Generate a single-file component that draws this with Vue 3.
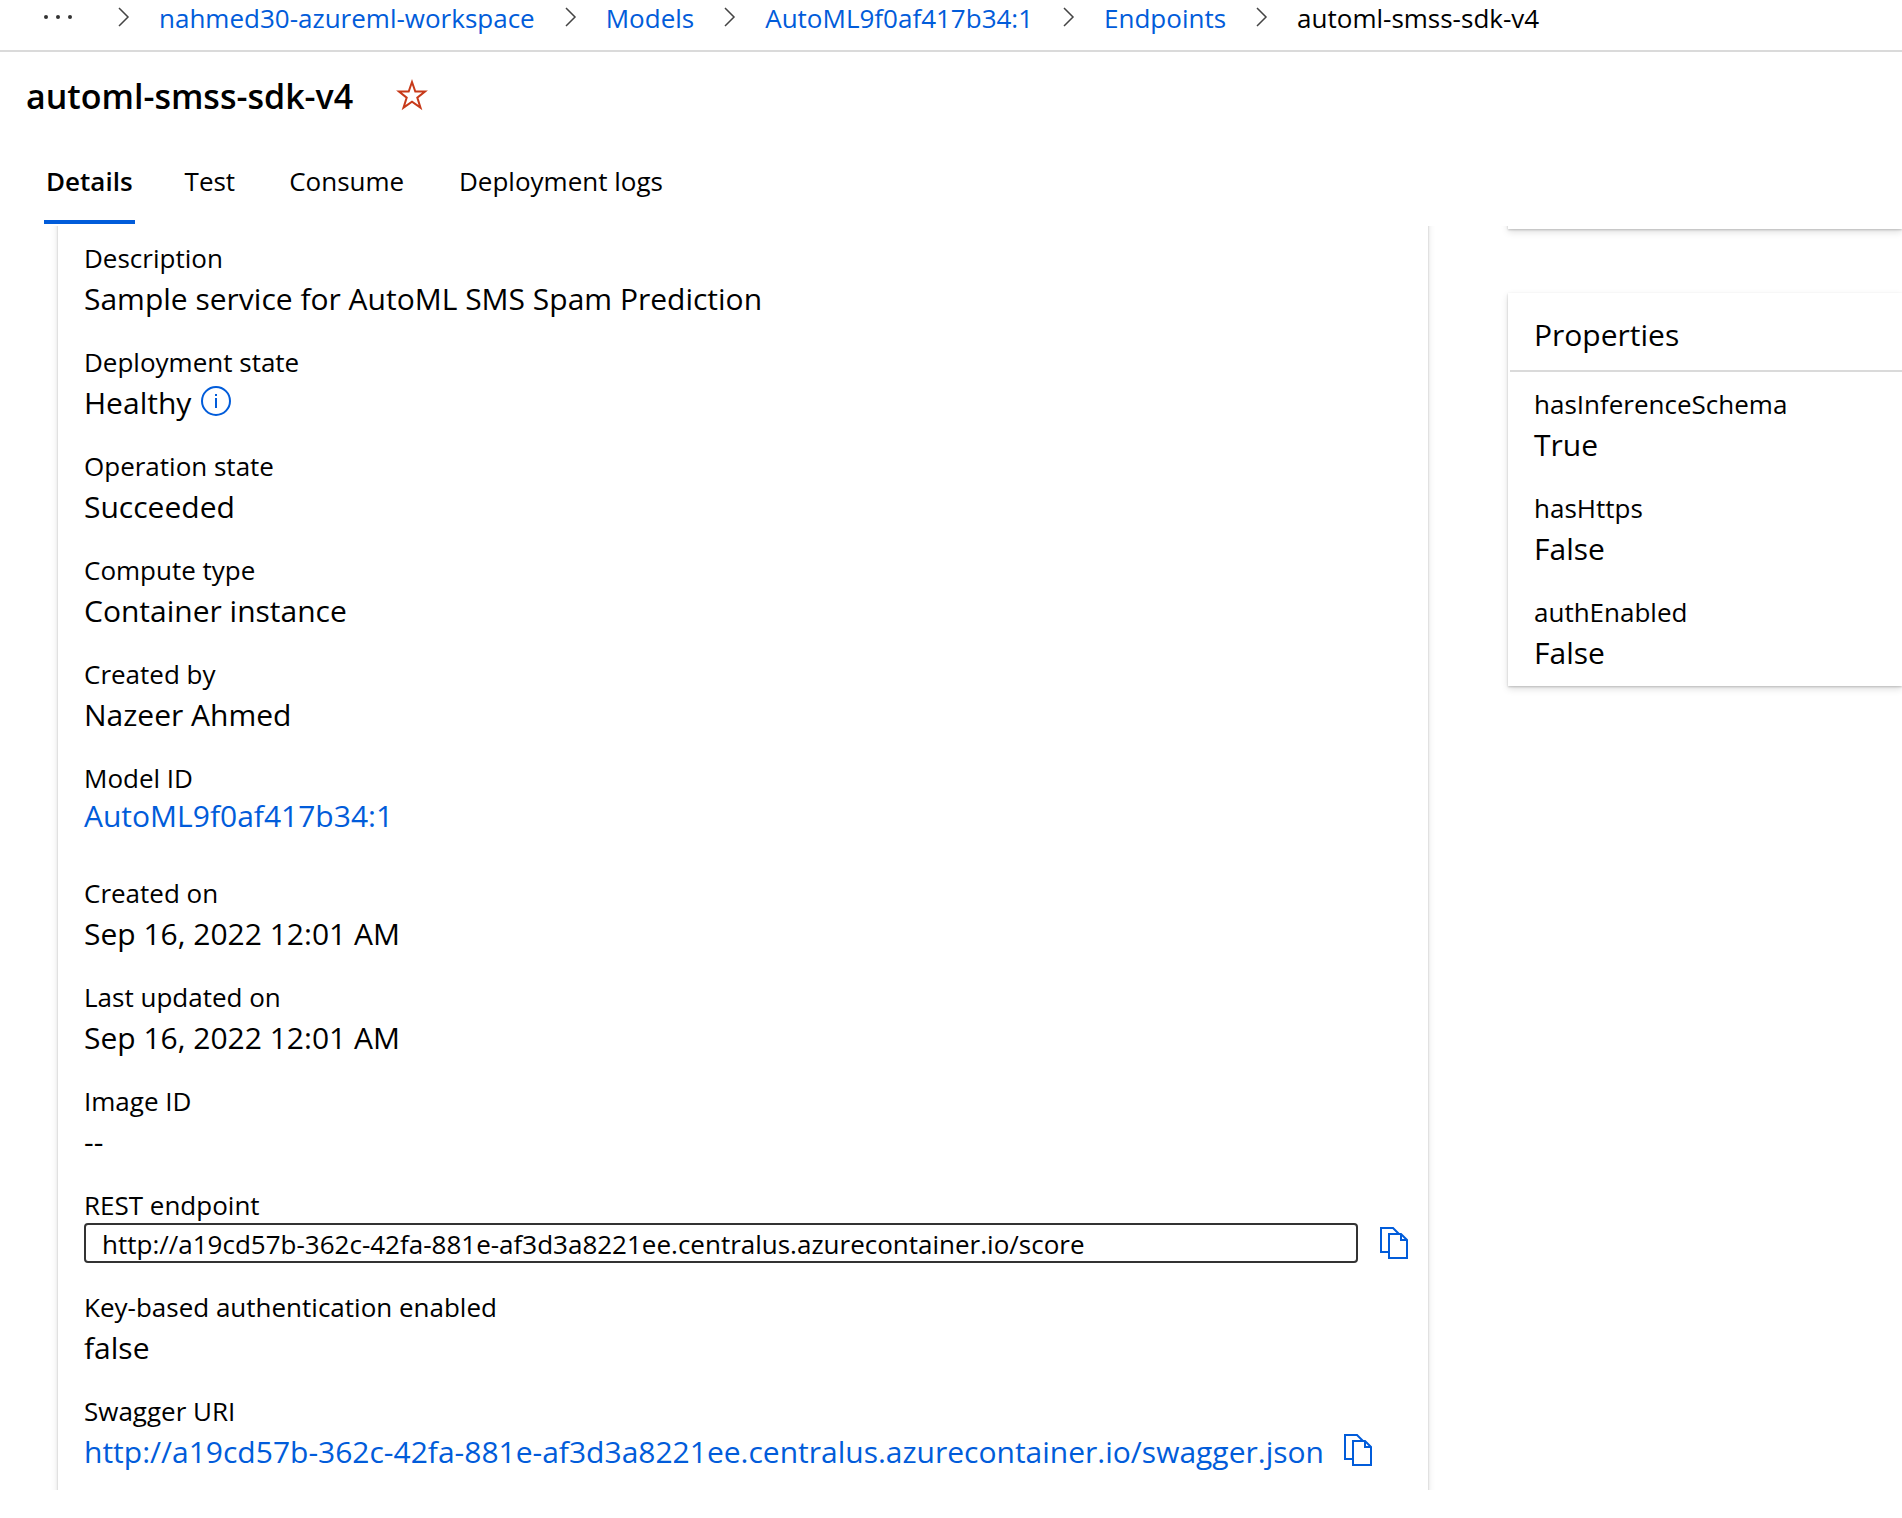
<script setup>
import { ref } from 'vue'

const crumbs = ['nahmed30-azureml-workspace', 'Models', 'AutoML9f0af417b34:1', 'Endpoints']
const name = 'automl-smss-sdk-v4'

const tabs = ['Details', 'Test', 'Consume', 'Deployment logs']
const activeTab = ref('Details')

const host = 'http://a19cd57b-362c-42fa-881e-af3d3a8221ee.centralus.azurecontainer.io'
const endpoint = ref(host + '/score')
const swagger = host + '/swagger.json'

const details = [
  { label: 'Description', value: 'Sample service for AutoML SMS Spam Prediction' },
  { label: 'Deployment state', value: 'Healthy', info: true },
  { label: 'Operation state', value: 'Succeeded' },
  { label: 'Compute type', value: 'Container instance' },
  { label: 'Created by', value: 'Nazeer Ahmed' },
  { label: 'Model ID', value: 'AutoML9f0af417b34:1', link: true },
  { label: 'Created on', value: 'Sep 16, 2022 12:01 AM' },
  { label: 'Last updated on', value: 'Sep 16, 2022 12:01 AM' },
  { label: 'Image ID', value: '--' }
]

const properties = [
  { label: 'hasInferenceSchema', value: 'True' },
  { label: 'hasHttps', value: 'False' },
  { label: 'authEnabled', value: 'False' }
]

const copy = (text) => navigator.clipboard?.writeText(text)
</script>

<template>
  <div class="page">
    <nav class="breadcrumb" aria-label="Breadcrumb">
      <button class="icon-button more" type="button" aria-label="More">
        <svg width="28" height="20" viewBox="0 0 28 20">
          <circle cx="2" cy="9" r="2" /><circle cx="14" cy="9" r="2" /><circle cx="26" cy="9" r="2" />
        </svg>
      </button>
      <template v-for="crumb in crumbs" :key="crumb">
        <svg class="chevron" width="11" height="20" viewBox="0 0 11 20"><path d="M1 0 10 9 1 18" /></svg>
        <a href="#">{{ crumb }}</a>
      </template>
      <svg class="chevron" width="11" height="20" viewBox="0 0 11 20"><path d="M1 0 10 9 1 18" /></svg>
      <span aria-current="page">{{ name }}</span>
    </nav>

    <header class="title-row">
      <h1>{{ name }}</h1>
      <button class="icon-button" type="button" aria-label="Add to favorites">
        <svg class="star" width="32" height="32" viewBox="0 0 32 32">
          <path d="M15 2 18.3 11.6H28L20.3 17.6 23.5 27.6 15 21.6 6.5 27.6 9.7 17.6 2 11.6H11.7Z" />
        </svg>
      </button>
    </header>

    <div class="tabs" role="tablist">
      <button
        v-for="tab in tabs"
        :key="tab"
        class="tab"
        :class="{ active: tab === activeTab }"
        type="button"
        role="tab"
        :aria-selected="tab === activeTab"
        :data-label="tab"
        @click="activeTab = tab"
      >{{ tab }}</button>
    </div>

    <main class="content">
      <section class="card details">
        <dl v-for="item in details" :key="item.label" class="field" :class="{ linked: item.link }">
          <dt>{{ item.label }}</dt>
          <dd>
            <a v-if="item.link" href="#">{{ item.value }}</a>
            <template v-else>{{ item.value }}</template>
            <button v-if="item.info" class="icon-button" type="button" aria-label="Deployment state information">
              <svg class="info" width="30" height="30" viewBox="0 0 30 30">
                <circle cx="15" cy="15" r="14" />
                <path d="M15 12V22M15 8V10" />
              </svg>
            </button>
          </dd>
        </dl>

        <div class="field">
          <label for="endpoint">REST endpoint</label>
          <div class="endpoint-row">
            <input id="endpoint" v-model="endpoint" type="text" readonly />
            <button class="icon-button" type="button" aria-label="Copy REST endpoint" @click="copy(endpoint)">
              <svg class="copy" width="28" height="32" viewBox="0 0 28 32">
                <path d="M9 25H1V1H13L19 7M9 7H21L27 13V31H9ZM21 7V13H27" />
              </svg>
            </button>
          </div>
        </div>

        <dl class="field">
          <dt>Key-based authentication enabled</dt>
          <dd>false</dd>
        </dl>

        <dl class="field">
          <dt>Swagger URI</dt>
          <dd class="swagger">
            <a href="#">{{ swagger }}</a>
            <button class="icon-button" type="button" aria-label="Copy Swagger URI" @click="copy(swagger)">
              <svg class="copy" width="28" height="32" viewBox="0 0 28 32">
                <path d="M9 25H1V1H13L19 7M9 7H21L27 13V31H9ZM21 7V13H27" />
              </svg>
            </button>
          </dd>
        </dl>
      </section>

      <aside class="side">
        <section class="card scrolled-card"></section>
        <section class="card">
          <h2>Properties</h2>
          <div class="properties">
            <dl v-for="item in properties" :key="item.label" class="field">
              <dt>{{ item.label }}</dt>
              <dd>{{ item.value }}</dd>
            </dl>
          </div>
        </section>
      </aside>
    </main>
  </div>
</template>

<style>
body {
  margin: 0;
  background: #fff;
}
</style>

<style scoped>
.page {
  color: #000;
  font: 26px/39px "Open Sans", "Noto Sans", sans-serif;
  overflow: hidden;
}

a {
  color: #015cda;
  text-decoration: none;
}

.icon-button {
  display: flex;
  flex: none;
  padding: 0;
  border: 0;
  background: none;
  cursor: pointer;
}

svg {
  flex: none;
  fill: none;
  overflow: visible;
}

.breadcrumb {
  display: flex;
  align-items: center;
  gap: 30px;
  padding: 0 44px 14px;
  border-bottom: 2px solid #dadada;
  line-height: 36px;
  white-space: nowrap;
}

.more {
  margin-right: 16px;
}

.more svg {
  fill: #333;
}

.chevron {
  stroke: #444;
  stroke-width: 1.5;
}

.title-row {
  display: flex;
  align-items: center;
  gap: 44px;
  padding: 20px 26px 0;
}

h1 {
  margin: 0;
  font-size: 34px;
  font-weight: 600;
  line-height: 48px;
}

.star {
  stroke: #c73a1a;
  stroke-width: 2;
}

.tabs {
  display: flex;
  gap: 48px;
  margin: 22px 44px 2px;
}

.tab {
  padding: 20px 2px 19px;
  border: 0;
  border-bottom: 4px solid transparent;
  background: none;
  color: inherit;
  font: inherit;
  text-align: left;
  cursor: pointer;
}

/* Reserves the semibold width so the row does not shift on selection. */
.tab::after {
  display: block;
  height: 0;
  overflow: hidden;
  visibility: hidden;
  content: attr(data-label);
  font-weight: 600;
}

.tab.active {
  border-color: #015cda;
  font-weight: 600;
}

.content {
  display: flex;
  align-items: flex-start;
  gap: 80px;
  padding-left: 58px;
  overflow: hidden;
}

.card {
  background: #fff;
  box-shadow: 0 3px 7px rgba(0, 0, 0, 0.13), 0 1px 2px rgba(0, 0, 0, 0.2);
}

/* The panels run past the top and bottom of the scroll area. */
.details {
  display: flex;
  flex: 1;
  flex-direction: column;
  gap: 23px;
  min-width: 0;
  margin: -20px 0;
  padding: 33px 20px 37px 26px;
}

.field {
  margin: 0;
}

dd {
  display: flex;
  align-items: center;
  gap: 10px;
  margin: 0;
  font-size: 30px;
  line-height: 42px;
}

dd .icon-button {
  margin-bottom: 4px;
}

label {
  display: block;
}

.linked {
  padding-bottom: 17px;
}

.linked dd {
  line-height: 36px;
}

.info,
.copy {
  stroke: #015cda;
  stroke-width: 2;
}

.endpoint-row {
  display: flex;
  align-items: center;
  gap: 22px;
  margin: -2px 0 2px;
}

input {
  box-sizing: border-box;
  flex: 1;
  min-width: 0;
  height: 40px;
  padding: 2px 16px 0;
  border: 2px solid #333;
  border-radius: 4px;
  background: #fff;
  color: inherit;
  font: inherit;
  line-height: 34px;
}

.swagger {
  gap: 20px;
}

.side {
  display: flex;
  flex: 0 0 394px;
  flex-direction: column;
  gap: 64px;
  margin-top: -37px;
}

.scrolled-card {
  height: 40px;
}

h2 {
  margin: 0 0 0 2px;
  padding: 21px 24px 14px;
  border-bottom: 2px solid #dadada;
  font-size: 30px;
  font-weight: 400;
  line-height: 42px;
}

.properties {
  display: flex;
  flex-direction: column;
  gap: 23px;
  padding: 13px 26px 12px;
}
</style>
